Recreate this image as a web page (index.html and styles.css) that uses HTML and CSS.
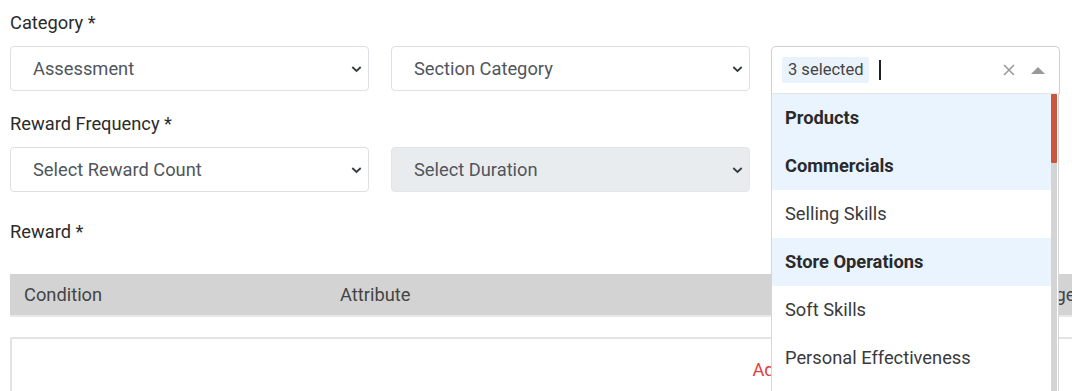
FILE: index.html
```html
<!DOCTYPE html>
<html lang="en">
<head>
    <meta charset="UTF-8">
    <meta name="viewport" content="width=device-width, initial-scale=1.0">
    <title>Reward Setup</title>
    <link rel="stylesheet" href="styles.css">
</head>
<body>
    <div class="form">
        <div class="field-label">Category *</div>
        <div class="field-row">
            <div class="select-box">
                <span>Assessment</span>
                <svg class="chevron" width="11" height="8" viewBox="0 0 11 8"><path d="M1.3 2 L5.5 6 L9.7 2" fill="none" stroke="#343a40" stroke-width="1.8"/></svg>
            </div>
            <div class="select-box">
                <span>Section Category</span>
                <svg class="chevron" width="11" height="8" viewBox="0 0 11 8"><path d="M1.3 2 L5.5 6 L9.7 2" fill="none" stroke="#343a40" stroke-width="1.8"/></svg>
            </div>
            <div class="multi">
                <div class="multi-head">
                    <span class="tag">3 selected</span>
                    <span class="caret"></span>
                    <svg class="clear" width="12" height="12" viewBox="0 0 12 12"><path d="M1 1 L11 11 M11 1 L1 11" stroke="#9a9a9a" stroke-width="1.6"/></svg>
                    <svg class="arrow" width="14" height="8" viewBox="0 0 14 8"><path d="M0 8 L7 1 L14 8 Z" fill="#999"/></svg>
                </div>
                <div class="multi-list">
                    <div class="option picked">Products</div>
                    <div class="option picked">Commercials</div>
                    <div class="option">Selling Skills</div>
                    <div class="option picked">Store Operations</div>
                    <div class="option">Soft Skills</div>
                    <div class="option">Personal Effectiveness</div>
                    <div class="scroll-track"><div class="scroll-thumb"></div></div>
                </div>
            </div>
        </div>

        <div class="field-label second">Reward Frequency *</div>
        <div class="field-row">
            <div class="select-box">
                <span>Select Reward Count</span>
                <svg class="chevron" width="11" height="8" viewBox="0 0 11 8"><path d="M1.3 2 L5.5 6 L9.7 2" fill="none" stroke="#343a40" stroke-width="1.8"/></svg>
            </div>
            <div class="select-box disabled">
                <span>Select Duration</span>
                <svg class="chevron" width="11" height="8" viewBox="0 0 11 8"><path d="M1.3 2 L5.5 6 L9.7 2" fill="none" stroke="#343a40" stroke-width="1.8"/></svg>
            </div>
        </div>

        <div class="field-label reward">Reward *</div>

        <div class="table-head">
            <div class="col-condition">Condition</div>
            <div class="col-attribute">Attribute</div>
            <div class="col-percent">Percentage</div>
        </div>
        <div class="table-body">
            <a href="#" class="add-link">Add Condition</a>
        </div>
    </div>
</body>
</html>
```

FILE: styles.css
```css
* {
    margin: 0;
    padding: 0;
    box-sizing: border-box;
}

body {
    font-family: Roboto, 'Noto Sans', sans-serif;
    background: #ffffff;
    color: #333333;
    overflow: hidden;
}

.form {
    padding: 11px 0 0 10px;
    width: 1120px;
}

.field-label {
    font-size: 18.3px;
    line-height: 24px;
    color: #2b2b2b;
    margin-bottom: 11px;
}

.field-label.second {
    margin-top: 21px;
}

.field-label.reward {
    margin-top: 28px;
    margin-bottom: 30px;
}

.field-row {
    display: grid;
    grid-template-columns: 359px 359px 288px;
    gap: 22px;
    height: 45px;
}

.select-box {
    height: 45px;
    border: 1px solid #dcdfe3;
    border-radius: 4px;
    background: #ffffff;
    display: flex;
    align-items: center;
    justify-content: space-between;
    padding: 0 6px 0 22px;
    font-size: 18.3px;
    color: #50565c;
}

.select-box.disabled {
    background: #e9ecef;
    border-color: #e3e6e9;
}

.chevron {
    display: block;
}

.multi {
    position: relative;
    z-index: 5;
    margin-left: -1px;
}

.multi-head {
    height: 48px;
    border: 1px solid #cfcfcf;
    border-bottom-color: #e6e6e6;
    border-radius: 5px 5px 0 0;
    background: #ffffff;
    display: flex;
    align-items: center;
    padding: 0 14px 0 10px;
}

.tag {
    background: #eaf3fc;
    color: #444;
    font-size: 16.5px;
    padding: 4px 6px;
    border-radius: 2px;
    line-height: 18px;
}

.caret {
    width: 2px;
    height: 20px;
    background: #222;
    margin-left: 10px;
    flex: 1;
    max-width: 2px;
}

.clear {
    margin-left: auto;
    margin-right: 16px;
}

.multi-list {
    position: absolute;
    top: 48px;
    left: 0;
    width: 288px;
    height: 320px;
    background: #ffffff;
    border-left: 1px solid #d6d6d6;
    border-right: 1px solid #d6d6d6;
    padding-right: 7px;
}

.option {
    height: 48px;
    line-height: 48px;
    padding-left: 13px;
    font-size: 18.3px;
    color: #3a3a3a;
}

.option.picked {
    background: #eaf4fe;
    font-weight: 700;
    color: #2a2a2a;
}

.scroll-track {
    position: absolute;
    top: 0;
    right: 1px;
    width: 6px;
    height: 100%;
    background: #d4d4d4;
}

.scroll-thumb {
    height: 69px;
    background: #c8573d;
    border-radius: 1px;
}

.table-head {
    display: flex;
    align-items: center;
    height: 43px;
    background: #d3d3d3;
    border-bottom: 2px solid #e8e8e8;
    font-size: 18.3px;
    color: #444;
}

.col-condition {
    width: 330px;
    padding-left: 14px;
}

.col-attribute {
    width: 643px;
}

.table-body {
    margin-top: 20px;
    height: 80px;
    border: 2px solid #e4e4e4;
    border-bottom: none;
    display: flex;
    justify-content: center;
    padding-top: 20px;
    padding-left: 490px;
}

.add-link {
    color: #e0413e;
    text-decoration: none;
    font-size: 18.3px;
    line-height: 22px;
}
```
